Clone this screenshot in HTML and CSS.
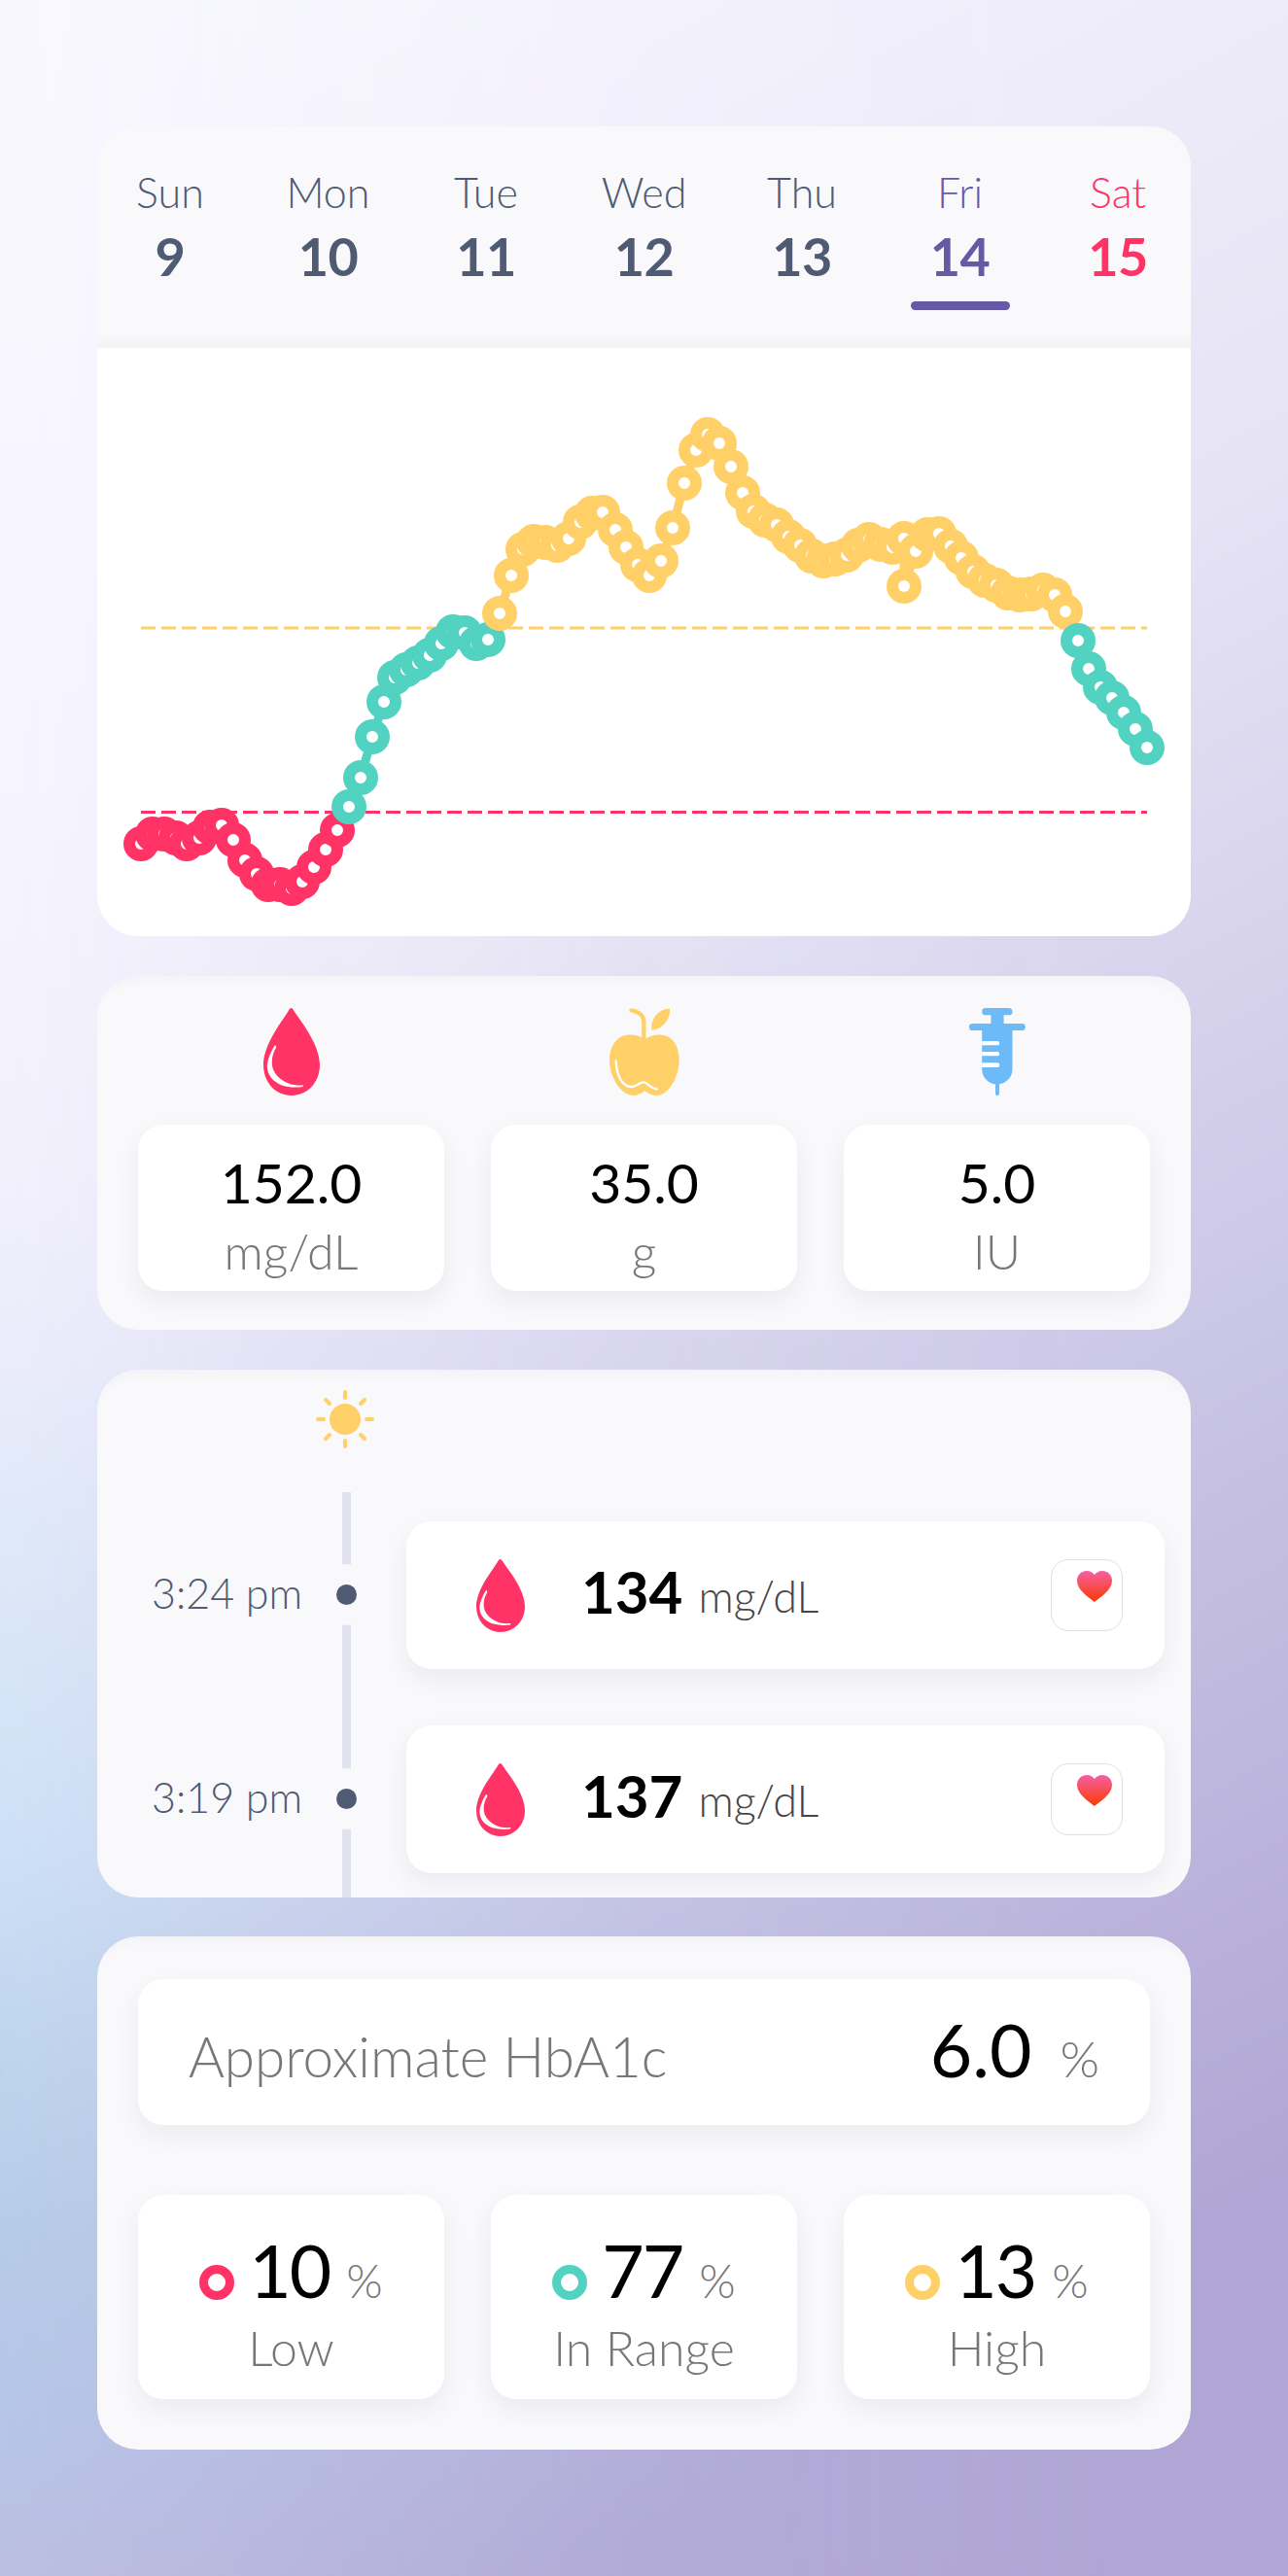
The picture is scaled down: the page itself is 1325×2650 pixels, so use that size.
FILE: index.html
```html
<!DOCTYPE html>
<html lang="en">
<head>
<meta charset="utf-8">
<title>Glucose diary</title>
<link rel="stylesheet" href="styles.css">
</head>
<body>
<main class="page">

<section class="card week-card">
  <div class="week">
    <div class="day"><span class="day-name">Sun</span><span class="day-num">9</span></div>
    <div class="day"><span class="day-name">Mon</span><span class="day-num">10</span></div>
    <div class="day"><span class="day-name">Tue</span><span class="day-num">11</span></div>
    <div class="day"><span class="day-name">Wed</span><span class="day-num">12</span></div>
    <div class="day"><span class="day-name">Thu</span><span class="day-num">13</span></div>
    <div class="day day-active"><span class="day-name">Fri</span><span class="day-num">14</span><span class="day-bar"></span></div>
    <div class="day day-sat"><span class="day-name">Sat</span><span class="day-num">15</span></div>
  </div>
  <div class="chart">
    <svg class="chart-svg" viewBox="100 358 1125 605" width="1125" height="605">
      <line class="limit limit-high" x1="145" y1="646" x2="1180" y2="646"/>
      <line class="limit limit-low" x1="145" y1="835.5" x2="1180" y2="835.5"/>
      <g class="series low">
        <polyline points="145,868 157,858 169,858 181,862 192,868 205,862 216,851 228,849 240,864 252,885 264,899 276,910 288,910 300,914 311,907 323,892 335,874 347,854"/>
        <circle cx="145" cy="868" r="12"/><circle cx="157" cy="858" r="12"/><circle cx="169" cy="858" r="12"/><circle cx="181" cy="862" r="12"/><circle cx="192" cy="868" r="12"/><circle cx="205" cy="862" r="12"/><circle cx="216" cy="851" r="12"/><circle cx="228" cy="849" r="12"/><circle cx="240" cy="864" r="12"/><circle cx="252" cy="885" r="12"/><circle cx="264" cy="899" r="12"/><circle cx="276" cy="910" r="12"/><circle cx="288" cy="910" r="12"/><circle cx="300" cy="914" r="12"/><circle cx="311" cy="907" r="12"/><circle cx="323" cy="892" r="12"/><circle cx="335" cy="874" r="12"/><circle cx="347" cy="854" r="12"/>
      </g>
      <g class="series mid">
        <polyline points="359,830 371,800 383,758 395,722 406,697 418,689 430,682 442,674 454,662 466,650 478,651 490,662 502,658"/>
        <circle cx="359" cy="830" r="12"/><circle cx="371" cy="800" r="12"/><circle cx="383" cy="758" r="12"/><circle cx="395" cy="722" r="12"/><circle cx="406" cy="697" r="12"/><circle cx="418" cy="689" r="12"/><circle cx="430" cy="682" r="12"/><circle cx="442" cy="674" r="12"/><circle cx="454" cy="662" r="12"/><circle cx="466" cy="650" r="12"/><circle cx="478" cy="651" r="12"/><circle cx="490" cy="662" r="12"/><circle cx="502" cy="658" r="12"/>
      </g>
      <g class="series high">
        <polyline points="514,631 526,592 538,565 549,557 561,558 573,561 585,554 597,537 609,528 620,527 633,545 644,563 656,581 668,592 680,577 692,543 704,497 716,463 728,447 740,456 752,480 764,507 775,526 787,535 799,540 811,552 823,561 835,572 847,577 859,575 871,571 883,561 894,555 906,560 918,563 930,554 930,603 942,567 954,550 966,549 978,562 989,574 1001,588 1013,597 1025,602 1037,610 1049,612 1061,611 1073,607 1085,612 1096,629"/>
        <circle cx="514" cy="631" r="12"/><circle cx="526" cy="592" r="12"/><circle cx="538" cy="565" r="12"/><circle cx="549" cy="557" r="12"/><circle cx="561" cy="558" r="12"/><circle cx="573" cy="561" r="12"/><circle cx="585" cy="554" r="12"/><circle cx="597" cy="537" r="12"/><circle cx="609" cy="528" r="12"/><circle cx="620" cy="527" r="12"/><circle cx="633" cy="545" r="12"/><circle cx="644" cy="563" r="12"/><circle cx="656" cy="581" r="12"/><circle cx="668" cy="592" r="12"/><circle cx="680" cy="577" r="12"/><circle cx="692" cy="543" r="12"/><circle cx="704" cy="497" r="12"/><circle cx="716" cy="463" r="12"/><circle cx="728" cy="447" r="12"/><circle cx="740" cy="456" r="12"/><circle cx="752" cy="480" r="12"/><circle cx="764" cy="507" r="12"/><circle cx="775" cy="526" r="12"/><circle cx="787" cy="535" r="12"/><circle cx="799" cy="540" r="12"/><circle cx="811" cy="552" r="12"/><circle cx="823" cy="561" r="12"/><circle cx="835" cy="572" r="12"/><circle cx="847" cy="577" r="12"/><circle cx="859" cy="575" r="12"/><circle cx="871" cy="571" r="12"/><circle cx="883" cy="561" r="12"/><circle cx="894" cy="555" r="12"/><circle cx="906" cy="560" r="12"/><circle cx="918" cy="563" r="12"/><circle cx="930" cy="603" r="12"/><circle cx="930" cy="554" r="12"/><circle cx="942" cy="567" r="12"/><circle cx="954" cy="550" r="12"/><circle cx="966" cy="549" r="12"/><circle cx="978" cy="562" r="12"/><circle cx="989" cy="574" r="12"/><circle cx="1001" cy="588" r="12"/><circle cx="1013" cy="597" r="12"/><circle cx="1025" cy="602" r="12"/><circle cx="1037" cy="610" r="12"/><circle cx="1049" cy="612" r="12"/><circle cx="1061" cy="611" r="12"/><circle cx="1073" cy="607" r="12"/><circle cx="1085" cy="612" r="12"/><circle cx="1096" cy="629" r="12"/>
      </g>
      <g class="series mid">
        <polyline points="1109,659 1120,688 1132,707 1144,718 1156,733 1168,750 1180,769"/>
        <circle cx="1109" cy="659" r="12"/><circle cx="1120" cy="688" r="12"/><circle cx="1132" cy="707" r="12"/><circle cx="1144" cy="718" r="12"/><circle cx="1156" cy="733" r="12"/><circle cx="1168" cy="750" r="12"/><circle cx="1180" cy="769" r="12"/>
      </g>
    </svg>
  </div>
</section>

<section class="card totals-card">
  <div class="total">
    <svg class="icon-top" viewBox="0 0 173 270" preserveAspectRatio="none"><path class="fill-low" d="M90,3 C110,35 173,110 173,175 C173,230 135,270 86,270 C37,270 0,230 0,175 C0,110 62,35 80,3 Q85,-3 90,3Z"/><path class="fill-white" d="M34,116 C20,140 10,165 12,185 C16,225 60,252 120,243 Q125,240 120,238 C85,242 45,225 30,190 C22,165 28,140 39,122 Q38,112 34,116Z"/></svg>
    <div class="tile total-tile"><span class="total-value">152.0</span><span class="total-unit">mg/dL</span></div>
  </div>
  <div class="total">
    <svg class="icon-top icon-apple" viewBox="80 50 218 270" preserveAspectRatio="none"><path class="fill-high" d="M190,146 C205,135 225,130 245,133 C280,138 297,170 297,210 C297,255 275,300 245,315 C225,325 205,318 190,305 C175,318 155,325 135,315 C105,300 80,255 80,210 C80,170 100,138 135,133 C155,130 175,135 190,146Z"/><path class="stem" d="M148,57 C170,62 187,70 187,95 L187,150"/><path class="fill-high" d="M268,52 C270,85 245,115 212,118 C205,85 235,50 268,52Z"/><path class="apple-shine" d="M100,213 C102,255 118,295 150,293 C170,291 175,275 190,280 C205,285 205,298 228,300"/></svg>
    <div class="tile total-tile"><span class="total-value">35.0</span><span class="total-unit">g</span></div>
  </div>
  <div class="total">
    <svg class="icon-top icon-syringe" viewBox="110 50 176 270" preserveAspectRatio="none"><rect class="fill-blue" x="150" y="50" width="95" height="22" rx="11"/><rect class="fill-blue" x="178" y="65" width="40" height="40"/><rect class="fill-blue" x="110" y="98" width="175" height="21" rx="10"/><path class="fill-blue" d="M150,110 H245 V238 A47,47 0 0 1 150,238Z"/><rect class="fill-blue" x="192" y="275" width="12" height="45" rx="6"/><path class="fill-white" d="M150,152 H198 a6.500,6.500 0 0 1 0,13 H150Z M150,185 H198 a6.500,6.500 0 0 1 0,13 H150Z M150,219 H198 a7,7 0 0 1 0,14 H150Z"/></svg>
    <div class="tile total-tile"><span class="total-value">5.0</span><span class="total-unit">IU</span></div>
  </div>
</section>

<section class="card log-card">
  <svg class="sun" viewBox="45 45 180 180"><circle class="fill-high" cx="135" cy="135" r="48"/><g class="rays"><line x1="135" y1="51" x2="135" y2="69"/><line x1="135" y1="201" x2="135" y2="219"/><line x1="51" y1="135" x2="69" y2="135"/><line x1="201" y1="135" x2="219" y2="135"/><line x1="75" y1="75" x2="87" y2="87"/><line x1="195" y1="75" x2="183" y2="87"/><line x1="75" y1="195" x2="87" y2="183"/><line x1="195" y1="195" x2="183" y2="183"/></g></svg>
  <div class="timeline">
    <div class="entry">
      <span class="entry-time">3:24 pm</span>
      <span class="entry-node"><span class="entry-dot"></span></span>
      <div class="tile entry-tile">
        <svg class="icon-entry" viewBox="0 0 173 270" preserveAspectRatio="none"><path class="fill-low" d="M90,3 C110,35 173,110 173,175 C173,230 135,270 86,270 C37,270 0,230 0,175 C0,110 62,35 80,3 Q85,-3 90,3Z"/><path class="fill-white" d="M34,116 C20,140 10,165 12,185 C16,225 60,252 120,243 Q125,240 120,238 C85,242 45,225 30,190 C22,165 28,140 39,122 Q38,112 34,116Z"/></svg>
        <span class="entry-value">134</span><span class="entry-unit">mg/dL</span>
        <span class="health"><svg class="heart" viewBox="0 0 107 95"><defs><linearGradient id="heart-a" x1="0" y1="0" x2="0" y2="1"><stop offset="0" stop-color="#f560a5"/><stop offset="1" stop-color="#fb3a00"/></linearGradient></defs><path fill="url(#heart-a)" d="M53,95 C35,80 0,60 0,30 C0,12 14,0 30,0 C40,0 49,5 53,12 C58,5 67,0 77,0 C93,0 107,12 107,30 C107,60 72,80 53,95Z"/></svg></span>
      </div>
    </div>
    <div class="entry">
      <span class="entry-time">3:19 pm</span>
      <span class="entry-node"><span class="entry-dot"></span></span>
      <div class="tile entry-tile">
        <svg class="icon-entry" viewBox="0 0 173 270" preserveAspectRatio="none"><path class="fill-low" d="M90,3 C110,35 173,110 173,175 C173,230 135,270 86,270 C37,270 0,230 0,175 C0,110 62,35 80,3 Q85,-3 90,3Z"/><path class="fill-white" d="M34,116 C20,140 10,165 12,185 C16,225 60,252 120,243 Q125,240 120,238 C85,242 45,225 30,190 C22,165 28,140 39,122 Q38,112 34,116Z"/></svg>
        <span class="entry-value">137</span><span class="entry-unit">mg/dL</span>
        <span class="health"><svg class="heart" viewBox="0 0 107 95"><defs><linearGradient id="heart-b" x1="0" y1="0" x2="0" y2="1"><stop offset="0" stop-color="#f560a5"/><stop offset="1" stop-color="#fb3a00"/></linearGradient></defs><path fill="url(#heart-b)" d="M53,95 C35,80 0,60 0,30 C0,12 14,0 30,0 C40,0 49,5 53,12 C58,5 67,0 77,0 C93,0 107,12 107,30 C107,60 72,80 53,95Z"/></svg></span>
      </div>
    </div>
  </div>
</section>

<section class="card stats-card">
  <div class="tile a1c">
    <span class="a1c-label">Approximate HbA1c</span>
    <span class="a1c-value">6.0</span><span class="a1c-unit">%</span>
  </div>
  <div class="stats">
    <div class="tile stat">
      <div class="stat-row"><span class="ring ring-low"></span><span class="stat-value">10</span><span class="stat-unit">%</span></div>
      <span class="stat-label">Low</span>
    </div>
    <div class="tile stat">
      <div class="stat-row"><span class="ring ring-mid"></span><span class="stat-value">77</span><span class="stat-unit">%</span></div>
      <span class="stat-label">In Range</span>
    </div>
    <div class="tile stat">
      <div class="stat-row"><span class="ring ring-high"></span><span class="stat-value">13</span><span class="stat-unit">%</span></div>
      <span class="stat-label">High</span>
    </div>
  </div>
</section>

</main>
</body>
</html>
```

FILE: styles.css
```css
* { box-sizing: border-box; }
html, body { margin: 0; padding: 0; }
body {
  position: relative;
  width: 1325px;
  height: 2650px;
  overflow: hidden;
  font-family: "Lato", "Liberation Sans", sans-serif;
  background: linear-gradient(152deg, #f8f7ff 0%, #e6e3f5 35%, #c9c5e5 62%, #b0a6d5 88%, #b0a6d5 100%);
}
body::before {
  content: "";
  position: absolute;
  inset: 0;
  z-index: -1;
  background: linear-gradient(to bottom,
    #f8f7ff 0, #f7f5ff 700px, #f2f0fb 1200px, #eaecfb 1400px, #dde8f8 1600px,
    #cde0f6 1900px, #bfd5ee 2100px, #b5cbe8 2300px, #b6c5e6 2500px, #bbbfe1 2650px);
  -webkit-mask-image: linear-gradient(to right, #000 0, rgba(0, 0, 0, .55) 300px, rgba(0, 0, 0, .2) 660px, transparent 1150px);
  mask-image: linear-gradient(to right, #000 0, rgba(0, 0, 0, .55) 300px, rgba(0, 0, 0, .2) 660px, transparent 1150px);
}
.page {
  display: flex;
  flex-direction: column;
  gap: 41px;
  padding: 130px 100px 0;
}
.card {
  background: #f9f9fc;
  border-radius: 42px;
  overflow: hidden;
  box-shadow: inset 0 16px 16px -16px rgba(60, 60, 90, .05);
}
.tile {
  background: #fff;
  border-radius: 26px;
  box-shadow: 0 10px 24px rgba(60, 60, 80, .07);
}

/* week */
.week-card { height: 833px; display: flex; flex-direction: column; }
.week {
  height: 228px;
  flex: none;
  display: flex;
  justify-content: space-between;
  padding: 43px 24px 0;
  background: linear-gradient(#f9f9fc calc(100% - 14px), #f3f3f7);
  color: #4f5b73;
}
.day { width: 102px; display: flex; flex-direction: column; align-items: center; }
.day-name { font-size: 43px; line-height: 50px; font-weight: 300; }
.day-num { font-size: 54px; line-height: 64px; font-weight: 700; margin-top: 9px; letter-spacing: -.5px; }
.day-bar { width: 102px; height: 9px; border-radius: 5px; background: #665aa6; margin-top: 14px; }
.day-active { color: #665aa6; }
.day-sat { color: #ff3366; }

/* chart */
.chart { flex: 1; background: #fff; }
.chart-svg { display: block; }
.limit { stroke-width: 3; stroke-dasharray: 15 6; }
.limit-high { stroke: #ffd068; }
.limit-low { stroke: #ff3366; }
.series polyline { fill: none; stroke-width: 9; }
.series circle { fill: #fff; stroke-width: 12; }
.low polyline, .low circle { stroke: #ff3366; }
.mid polyline, .mid circle { stroke: #52d2c1; }
.high polyline, .high circle { stroke: #ffd068; }

/* icon fills */
.fill-low { fill: #ff3366; }
.fill-high { fill: #ffd068; }
.fill-blue { fill: #6cbaf8; }
.fill-white { fill: #fff; }
.stem { fill: none; stroke: #ffd068; stroke-width: 13; stroke-linecap: round; }
.apple-shine { fill: none; stroke: #fff; stroke-width: 7; stroke-linecap: round; }

/* totals */
.totals-card {
  height: 364px;
  padding: 33px 42px 0;
  display: grid;
  grid-template-columns: repeat(3, 315px);
  column-gap: 48px;
}
.total { display: flex; flex-direction: column; align-items: center; gap: 30px; }
.icon-top { width: 58px; height: 90px; display: block; flex: none; }
.icon-apple { width: 72px; }
.total-tile {
  width: 315px;
  height: 171px;
  display: flex;
  flex-direction: column;
  align-items: center;
  padding-top: 26px;
}
.total-value { font-size: 57px; line-height: 66px; font-weight: 400; color: #000; }
.total-unit { font-size: 50px; line-height: 56px; font-weight: 300; color: #777; margin-top: 10px; }

/* log */
.log-card { height: 543px; display: flex; flex-direction: column; }
.sun { width: 60px; height: 60px; margin: 21px 0 0 225px; display: block; flex: none; }
.rays line { stroke: #ffd068; stroke-width: 12; stroke-linecap: round; }
.timeline {
  position: relative;
  flex: 1;
  margin-top: 45px;
  padding: 30px 0 0 56px;
  display: flex;
  flex-direction: column;
  gap: 58px;
}
.timeline::before {
  content: "";
  position: absolute;
  left: 252px;
  top: 0;
  bottom: 0;
  width: 9px;
  background: #e0e3ed;
}
.entry { position: relative; display: flex; align-items: center; height: 152px; }
.entry-time { width: 169px; font-size: 43px; font-weight: 300; color: #4f5b73; white-space: nowrap; padding-bottom: 6px; }
.entry-node {
  width: 63px;
  height: 63px;
  border-radius: 50%;
  background: #f9f9fc;
  display: flex;
  align-items: center;
  justify-content: center;
  flex: none;
  margin-top: -2px;
}
.entry-dot { width: 21px; height: 21px; border-radius: 50%; background: #4f5b73; }
.entry-tile {
  width: 780px;
  height: 152px;
  margin-left: 30px;
  padding: 0 43px 0 72px;
  display: flex;
  align-items: center;
}
.icon-entry { width: 50px; height: 75px; display: block; flex: none; margin-right: 58px; }
.entry-value { font-size: 60px; font-weight: 700; color: #000; line-height: 70px; padding-bottom: 8px; }
.entry-unit { font-size: 45px; font-weight: 300; color: #4a4545; line-height: 70px; margin-left: 16px; padding-top: 2px; }
.health {
  width: 74px;
  height: 74px;
  margin-left: auto;
  border: 1.5px solid #dfdfdf;
  border-radius: 18px;
  padding: 11px 10px 0 26px;
  display: block;
}
.heart { width: 36px; height: 32px; display: block; }

/* stats */
.stats-card { height: 528px; margin-top: -1px; padding: 44px 42px 0; display: flex; flex-direction: column; gap: 72px; }
.a1c {
  height: 150px;
  display: flex;
  align-items: baseline;
  padding: 27px 52px 0;
}
.a1c-label { font-size: 56.500px; font-weight: 300; color: #777; margin-right: auto; }
.a1c-value { font-size: 75px; font-weight: 400; color: #000; }
.a1c-unit { font-size: 52px; font-weight: 300; color: #777; margin-left: 29px; }
.stats { display: grid; grid-template-columns: repeat(3, 315px); column-gap: 48px; }
.stat { height: 210px; display: flex; flex-direction: column; align-items: center; padding-top: 32px; }
.stat-row { display: flex; align-items: baseline; }
.ring { width: 36px; height: 36px; border-radius: 50%; border: 9px solid; margin-right: 15px; align-self: flex-end; margin-bottom: 14px; }
.ring-low { border-color: #ff3366; }
.ring-mid { border-color: #52d2c1; }
.ring-high { border-color: #ffd068; }
.stat-value { font-size: 75px; line-height: 90px; font-weight: 400; color: #000; letter-spacing: -2px; }
.stat-unit { font-size: 48px; font-weight: 300; color: #777; margin-left: 17px; }
.stat-label { font-size: 50px; line-height: 56px; font-weight: 300; color: #777; margin-top: 7px; }
```
